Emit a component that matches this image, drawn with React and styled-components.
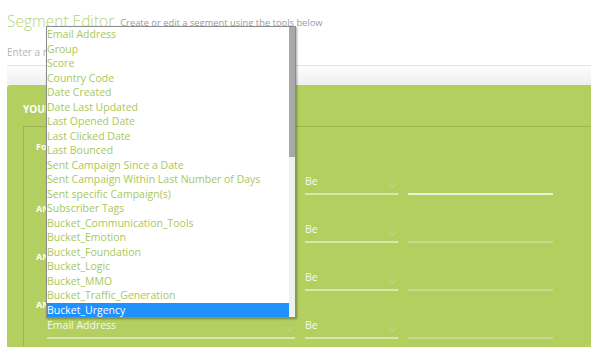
import React from 'react';
import styled, { createGlobalStyle } from 'styled-components';

const GlobalStyle = createGlobalStyle`
  html, body { margin: 0; padding: 0; background: #fff; overflow: hidden; }
  body { font-family: "Open Sans", "Noto Sans", sans-serif; }
`;

const Page = styled.div`
  position: relative;
  width: 640px;
  padding-left: 7px;
  box-sizing: border-box;
`;

const Header = styled.header`
  display: flex;
  align-items: baseline;
  gap: 6px;
  padding-top: 11px;
`;

const Title = styled.h1`
  margin: 0;
  font-size: 15.5px;
  font-weight: 300;
  line-height: 20px;
  color: #b6d377;
`;

const Subtitle = styled.span`
  font-size: 9.35px;
  line-height: 12px;
  color: #9b9b9b;
  position: relative;
  top: -1px;
`;

const NameField = styled.div`
  padding: 14px 0 6px;
  font-size: 10px;
  line-height: 14px;
  color: #b3b3b3;
  border-bottom: 1px solid #e3e3ec;
`;

const Strip = styled.div`
  height: 19px;
  background: linear-gradient(#fdfdfd, #efefef);
`;

const Panel = styled.section`
  background: #b2cf60;
  border-radius: 3px 0 0 0;
  padding: 18px 0 0 16px;
  min-height: 300px;
`;

const PanelTitle = styled.h2`
  margin: 0;
  font-size: 10px;
  font-weight: 700;
  line-height: 12px;
  color: #fff;
`;

const RulesBox = styled.div`
  margin-top: 11px;
  border-top: 1px solid rgba(70, 90, 10, 0.2);
  border-left: 1px solid rgba(70, 90, 10, 0.2);
  padding: 14px 0 30px 12px;
  min-height: 250px;
`;

const Label = styled.div`
  font-size: 9px;
  font-weight: 700;
  line-height: 12px;
  color: #fff;
  margin-top: ${p => (p.$intro ? '0' : '8px')};
  margin-bottom: ${p => (p.$intro ? '14px' : '0')};
  white-space: nowrap;
`;

const FieldsRow = styled.div`
  display: flex;
  gap: 10px;
  height: 28px;
  margin-left: 11px;
`;

const SelectField = styled.div`
  box-sizing: border-box;
  width: ${p => p.$width}px;
  height: 28px;
  display: flex;
  align-items: flex-end;
  justify-content: space-between;
  padding-bottom: 5px;
  border-bottom: 2px solid #d8e6b2;
  font-size: 10.5px;
  line-height: 14px;
  color: #f6f9ee;
  white-space: nowrap;
`;

const InputField = styled.div`
  box-sizing: border-box;
  width: 145px;
  height: 28px;
  border-bottom: 2px solid ${p => (p.$bright ? '#eaf1d9' : '#c6da8f')};
`;

const Chevron = styled.svg`
  flex: none;
  display: block;
`;

const ListBox = styled.div`
  position: absolute;
  left: 46px;
  top: 26px;
  width: 250px;
  height: 292px;
  box-sizing: border-box;
  border: 1px solid #8c8c8c;
  background: #fff;
  display: flex;
  box-shadow: 1px 1px 2px rgba(0, 0, 0, 0.35);
  z-index: 10;
`;

const Options = styled.ul`
  flex: 1;
  margin: 0;
  padding: 0;
  list-style: none;
  overflow: hidden;
`;

const Option = styled.li`
  height: 14.5px;
  line-height: 14.5px;
  font-size: 10.5px;
  white-space: nowrap;
  color: ${p => (p.$selected ? '#fff' : '#a8c85a')};
  background: ${p => (p.$selected ? '#1e90ff' : 'transparent')};
`;

const Scrollbar = styled.div`
  width: 6px;
  background: #f0f0f0;
`;

const ScrollThumb = styled.div`
  height: 130px;
  background: #a9a9a9;
`;

const options = [
  'Email Address',
  'Group',
  'Score',
  'Country Code',
  'Date Created',
  'Date Last Updated',
  'Last Opened Date',
  'Last Clicked Date',
  'Last Bounced',
  'Sent Campaign Since a Date',
  'Sent Campaign Within Last Number of Days',
  'Sent specific Campaign(s)',
  'Subscriber Tags',
  'Bucket_Communication_Tools',
  'Bucket_Emotion',
  'Bucket_Foundation',
  'Bucket_Logic',
  'Bucket_MMO',
  'Bucket_Traffic_Generation',
  'Bucket_Urgency',
];

const conditions = [
  { label: null, bright: true },
  { label: 'AND', bright: false },
  { label: 'AND', bright: false },
  { label: 'AND', bright: false },
];

const Down = () => (
  <Chevron width="10" height="6" viewBox="0 0 10 6">
    <polyline points="0.5,0.5 5,5 9.5,0.5" fill="none" stroke="#c5d5a0" strokeWidth="1" />
  </Chevron>
);

export default function App() {
  return (
    <Page>
      <GlobalStyle />
      <Header>
        <Title>Segment Editor</Title>
        <Subtitle>Create or edit a segment using the tools below</Subtitle>
      </Header>
      <NameField>Enter a name for this segment</NameField>
      <Strip />
      <Panel>
        <PanelTitle>YOUR SEGMENT RULES</PanelTitle>
        <RulesBox>
          <Label $intro>For subscribers where</Label>
          {conditions.map((c, i) => (
            <div key={i}>
              {c.label && <Label>{c.label}</Label>}
              <FieldsRow>
                <SelectField $width={248}>
                  <span>Email Address</span>
                  <Down />
                </SelectField>
                <SelectField $width={93}>
                  <span>Be</span>
                  <Down />
                </SelectField>
                <InputField $bright={c.bright} />
              </FieldsRow>
            </div>
          ))}
        </RulesBox>
      </Panel>
      <ListBox>
        <Options>
          {options.map((o, i) => (
            <Option key={o} $selected={i === options.length - 1}>{o}</Option>
          ))}
        </Options>
        <Scrollbar>
          <ScrollThumb />
        </Scrollbar>
      </ListBox>
    </Page>
  );
}
